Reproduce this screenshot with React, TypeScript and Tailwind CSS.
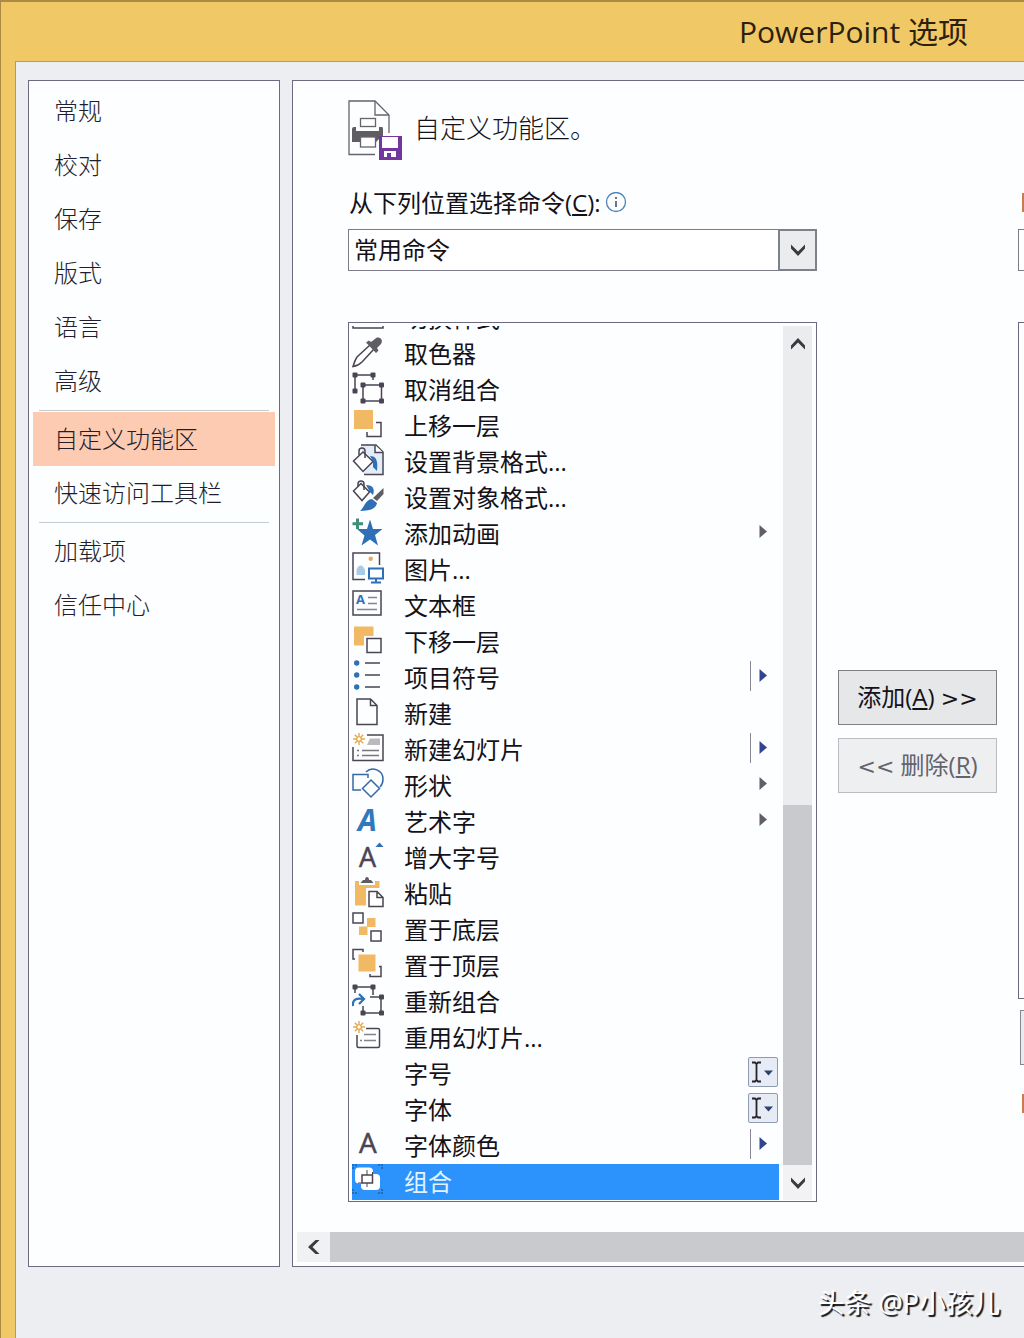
import React, { useState } from 'react';

type Extra = 'menu' | 'split' | 'combo';

interface Command {
  label: string;
  icon?: React.ReactNode;
  extra?: Extra;
}

const INK = '#4a4453';
const BLUE = '#2f6fb5';
const ORANGE = '#f2b964';

const Icon: React.FC<{ children?: React.ReactNode }> = ({ children }) => (
  <svg className="w-8 h-8 shrink-0 overflow-visible" viewBox="0 0 32 32" fill="none" stroke={INK} strokeWidth="1.5" aria-hidden="true">
    {children}
  </svg>
);

const Burst = () => (
  <g stroke="#e5a94a" strokeWidth="1.4">
    <circle cx="7" cy="7" r="2.4" />
    <path d="M7 1v3M7 10v3M1 7h3M10 7h3M2.8 2.8l2 2M9.2 9.2l2 2M11.2 2.8l-2 2M4.8 9.2l-2 2" />
  </g>
);

const Handle: React.FC<{ x: number; y: number }> = ({ x, y }) => (
  <rect x={x - 2.5} y={y - 2.5} width="5" height="5" rx="1" fill={INK} stroke="none" />
);

const commands: Command[] = [
  { label: '切换样式', icon: <Icon><path d="M1 10V28H31V10" /></Icon> },
  {
    label: '取色器',
    icon: (
      <Icon>
        <path d="M18 9L5 21C3 24 2 27 1 30.500C5 30 8 28 10 26L22 13" fill="#fff" />
        <path d="M14 6.500L17 4.500L19 6L23 3C27 -1 32 4 29 8L25 12L26.500 14.500L24 17Z" fill="#5d5d62" stroke="none" />
      </Icon>
    ),
  },
  {
    label: '取消组合',
    icon: (
      <Icon>
        <path d="M3 19V3H21V8" />
        <rect x="11" y="13" width="18.500" height="16" />
        <Handle x={3} y={3} /><Handle x={21} y={3} /><Handle x={3} y={19} />
        <Handle x={11} y={13} /><Handle x={29.5} y={13} /><Handle x={11} y={29} /><Handle x={29.5} y={29} />
      </Icon>
    ),
  },
  {
    label: '上移一层',
    icon: (
      <Icon>
        <rect x="2" y="2" width="19" height="19" fill={ORANGE} stroke="none" />
        <path d="M24 14.500H29V28.500H15V24" />
      </Icon>
    ),
  },
  {
    label: '设置背景格式...',
    icon: (
      <Icon>
        <path d="M9 1H24L31 8V30.500H12" fill="#e3edf8" />
        <path d="M23 1V8.500H31" fill="#fff" />
        <path d="M1.500 17L11 8L21 17.500L11 27.500Z" fill="#fff" />
        <path d="M7 11V7C7 3 13 3 13 7V14" />
        <path d="M18 12C25 12 26 18 25 27L21 23V17Z" fill={BLUE} stroke="none" />
      </Icon>
    ),
  },
  {
    label: '设置对象格式...',
    icon: (
      <Icon>
        <path d="M14 5C21 5 23 9 21 15L18 12Z" fill={BLUE} stroke="none" />
        <path d="M1.500 11L9 3.500L17.500 12L10 20.500Z" fill="#fff" />
        <path d="M6 7V4C6 0 12 0 12 4V10" />
        <path d="M31.500 8V14L25 21L21 18Z" fill="#5d5d62" stroke="none" />
        <path d="M20 19L25 23C24 29 17 31 8 31C12 28 13 20 20 19Z" fill={BLUE} stroke="none" />
      </Icon>
    ),
  },
  {
    label: '添加动画',
    extra: 'menu',
    icon: (
      <Icon>
        <path d="M18 3.500L21 13H30.500L23 19L26 29.500L18 23.500L9.500 29.500L12.500 19.500L5 13H15Z" fill={BLUE} stroke="none" />
        <path d="M5.500 2.500V13M0.500 7.800H11" stroke="#3f8f77" strokeWidth="3" />
      </Icon>
    ),
  },
  {
    label: '图片...',
    icon: (
      <Icon>
        <path d="M13 27.500H1V1H27.500V13" />
        <circle cx="18.700" cy="6.700" r="2.200" fill="#eba65c" stroke="none" />
        <path d="M4.500 23V18C6 12 11 12 13 18V23Z" fill="#a9cbe8" stroke="none" />
        <rect x="17" y="16.500" width="14" height="10" stroke={BLUE} strokeWidth="2" />
        <path d="M24 27V30M19 30.500H29" stroke={BLUE} strokeWidth="2" />
      </Icon>
    ),
  },
  {
    label: '文本框',
    icon: (
      <Icon>
        <rect x="1" y="3" width="28" height="24" />
        <text x="4" y="16" fontSize="13" fontWeight="700" fontFamily="Open Sans, sans-serif" fill={BLUE} stroke="none">A</text>
        <path d="M16 9.500H25M16 15.500H25M5 21.500H25" stroke="#85838c" />
      </Icon>
    ),
  },
  {
    label: '下移一层',
    icon: (
      <Icon>
        <path d="M2 2.500H21.500V12H12V21.500H2Z" fill={ORANGE} stroke="none" />
        <rect x="15" y="14.500" width="14" height="14" />
      </Icon>
    ),
  },
  {
    label: '项目符号',
    extra: 'split',
    icon: (
      <Icon>
        <g fill={BLUE} stroke="none">
          <circle cx="4.700" cy="3" r="2.700" /><circle cx="4.700" cy="15" r="2.700" /><circle cx="4.700" cy="27" r="2.700" />
        </g>
        <path d="M13 3H28M13 15H28M13 27H28" />
      </Icon>
    ),
  },
  {
    label: '新建',
    icon: <Icon><path d="M5 3H18.500L25 9.500V28.500H5Z M18.500 3V9.500H25" /></Icon>,
  },
  {
    label: '新建幻灯片',
    extra: 'split',
    icon: (
      <Icon>
        <path d="M15 3H31V28.500H1V15" />
        <path d="M18 6.500H28V13H15Z" fill="#b9b9be" stroke="none" />
        <path d="M5 18.500H7M10 18.500H27M5 23.500H7M10 23.500H27" stroke="#77757e" />
        <Burst />
      </Icon>
    ),
  },
  {
    label: '形状',
    extra: 'menu',
    icon: (
      <Icon>
        <g stroke="#3569a8">
          <path d="M9 22H1V6.500H16V10" />
          <path d="M14 4C20 -2 31 2 31 11C31 14 30 17 28 19" />
          <path d="M19 12L27.500 20.500L19 29L10.500 20.500Z" />
        </g>
      </Icon>
    ),
  },
  {
    label: '艺术字',
    extra: 'menu',
    icon: (
      <Icon>
        <text x="6" y="27" fontSize="30" fontWeight="700" fontStyle="italic" fontFamily="Open Sans, sans-serif" fill="#3177be" stroke="none">A</text>
      </Icon>
    ),
  },
  {
    label: '增大字号',
    icon: (
      <Icon>
        <text x="7" y="27" fontSize="27" fontFamily="Open Sans, sans-serif" fill={INK} stroke={INK} strokeWidth="0.5">A</text>
        <path d="M23.500 7L27.500 2.500L31.500 7Z" fill={BLUE} stroke="none" />
      </Icon>
    ),
  },
  {
    label: '粘贴',
    icon: (
      <Icon>
        <path d="M3 5H7V9H23V5H27.500V12H14V29.500H3Z" fill={ORANGE} stroke="none" />
        <path d="M8.500 7L11 4H13C13 0 17 0 17 4H19L21.500 7Z" fill="#5d5d62" stroke="none" />
        <path d="M17 15.500H25L31 21.500V30.500H17Z M25 15.500V21.500H31" fill="#fff" />
      </Icon>
    ),
  },
  {
    label: '置于底层',
    icon: (
      <Icon>
        <path d="M15 6H23.500V15H15.500V23H7V14.500H15Z" fill={ORANGE} stroke="none" />
        <rect x="1" y="1" width="10" height="10" /><rect x="19" y="19" width="10" height="10" />
      </Icon>
    ),
  },
  {
    label: '置于顶层',
    icon: (
      <Icon>
        <rect x="6.500" y="6.500" width="17" height="17" fill={ORANGE} stroke="none" />
        <path d="M3 11H1V1.500H11V4M27 18.500H29V28.500H18V26" />
      </Icon>
    ),
  },
  {
    label: '重新组合',
    icon: (
      <Icon>
        <path d="M3 9V3H21V11M11 22V29H29V13H18" />
        <Handle x={3} y={3} /><Handle x={21} y={3} />
        <Handle x={29.5} y={13} /><Handle x={11} y={29} /><Handle x={29.5} y={29} />
        <path d="M1 22C0 15 5 14 11 15M7 10L12 15L7 20" stroke={BLUE} strokeWidth="2.200" />
      </Icon>
    ),
  },
  {
    label: '重用幻灯片...',
    icon: (
      <Icon>
        <path d="M14 8.500H26Q27.500 8.500 27.500 10V26Q27.500 27.500 26 27.500H6.500Q5 27.500 5 26V15" />
        <path d="M12 14.500H24M8 20.500H10M12 20.500H24" stroke="#85838c" />
        <Burst />
      </Icon>
    ),
  },
  { label: '字号', extra: 'combo' },
  { label: '字体', extra: 'combo' },
  {
    label: '字体颜色',
    extra: 'split',
    icon: (
      <Icon>
        <text x="7" y="25" fontSize="28" fontFamily="Open Sans, sans-serif" fill={INK} stroke={INK} strokeWidth="0.5">A</text>
      </Icon>
    ),
  },
  {
    label: '组合',
    icon: (
      <Icon>
        <g fill="#fff" stroke="none">
          <rect x="3" y="3.500" width="18" height="16" rx="4" />
          <rect x="9" y="10" width="19" height="16" rx="4" />
        </g>
        <rect x="10" y="11" width="10.500" height="8" />
        <path d="M10 19H6M15 11V6M20.500 11V8M15 19V23" strokeWidth="1" />
        <path d="M1 5V1H5M26 1H30V5M30 25V29H26M5 29H1V25" stroke="#24609f" strokeDasharray="2 1" />
      </Icon>
    ),
  },
];

const navGroups = [
  ['常规', '校对', '保存', '版式', '语言', '高级'],
  ['自定义功能区', '快速访问工具栏'],
  ['加载项', '信任中心'],
];

const Chevron: React.FC<{ className?: string }> = ({ className = '' }) => (
  <svg className={`w-4 h-4 ${className}`} viewBox="0 0 16 16" fill="#3c3a40" aria-hidden="true">
    <path d="M1 2.500L8 9.500L15 2.500V6.500L8 14L1 6.500Z" />
  </svg>
);

const RowExtra: React.FC<{ kind?: Extra }> = ({ kind }) => {
  if (!kind) return null;
  if (kind === 'combo') {
    return (
      <svg className="w-[31px] h-8" viewBox="0 0 31 32" fill="none" aria-hidden="true">
        <rect x="0.500" y="1.500" width="29" height="29" rx="1.500" fill="#e6ebf5" stroke="#8e9bb0" />
        <path d="M4 6.500H7L8.500 8L10 6.500H13M8.500 8V24M4 25.500H7L8.500 24L10 25.500H13" stroke="#25242c" strokeWidth="1.800" />
        <path d="M16 14.500H25L20.500 19.500Z" fill="#2c4270" />
      </svg>
    );
  }
  return (
    <svg className="w-[31px] h-8" viewBox="0 0 31 32" aria-hidden="true">
      {kind === 'split' && <path d="M2.500 1V31" stroke="#8b8798" />}
      <path d="M11.500 9L19 15.500L11.500 22Z" fill={kind === 'split' ? '#33448f' : '#625d68'} />
    </svg>
  );
};

const Arrows: React.FC<{ text: string }> = ({ text }) => (
  <span className="text-[22px] font-['DejaVu_Sans',sans-serif]">{text}</span>
);

const App: React.FC = () => {
  const [page, setPage] = useState('自定义功能区');
  const [selected, setSelected] = useState('组合');

  return (
    <div className="min-h-screen flex flex-col overflow-hidden bg-[#f0c866] border-t-2 border-l border-[#ad8a43] text-2xl text-[#141218] font-['Open_Sans','Noto_Sans_CJK_SC',sans-serif]">
      <header className="h-[59px] shrink-0 flex items-center justify-end pr-14">
        <h1 className="text-[30px] leading-9 text-[#2b200c]">PowerPoint 选项</h1>
      </header>

      <div className="flex-1 flex flex-col ml-3.5 pl-3 pt-[18px] bg-[#edeef1] border-t border-l border-[#b99a5a]">
        <div className="flex gap-3">
          <nav className="w-[252px] shrink-0 p-1 pt-[3px] bg-[#fcfeff] border border-[#6c6982]">
            {navGroups.map((group, i) => (
              <div key={group[0]}>
                {i > 0 && <hr className="mx-1.5 mt-0.5 mb-px border-[#c3cbd1]" />}
                {group.map((name) => (
                  <button
                    key={name}
                    onClick={() => setPage(name)}
                    className={`block w-full h-[54px] pl-[21px] text-left font-light text-[#231c2c] ${page === name ? 'bg-[#fdcbb1]' : ''}`}
                  >
                    {name}
                  </button>
                ))}
              </div>
            ))}
          </nav>

          <main className="flex-1 min-w-0 flex flex-col bg-[#fcfeff] border border-r-0 border-[#6c6982]">
            <div className="pl-[55px] pt-[19px] flex items-start gap-3">
              <svg className="w-[54px] h-[60px]" viewBox="0 0 54 60" fill="none" stroke="#66636b" strokeWidth="1.300" aria-hidden="true">
                <path d="M27 54.500H1V1H27L41 15V33" />
                <path d="M27 1V15H41" />
                <path d="M4 29Q4 27 6 27H8V31H31V27H34Q35 27 35 29V39H4Z" fill="#5e5e62" stroke="none" />
                <path d="M4 39V42H12V39ZM28 39V42L31 39Z" fill="#5e5e62" stroke="none" />
                <rect x="12.500" y="18.500" width="15" height="8" fill="#fff" />
                <rect x="12.500" y="37" width="15" height="10" fill="#fff" />
                <path d="M31 36H54V60H31Z" fill="#7336a0" stroke="none" />
                <path d="M34 37H50V48H34ZM36 51H48V57H43V53H39V57H36Z" fill="#fff" stroke="none" />
              </svg>
              <h2 className="text-[26px] leading-14 font-light">自定义功能区。</h2>
            </div>

            <div className="pl-[55px] pt-[25px] flex gap-[21px]">
              <section className="flex-1 min-w-0">
                <div className="h-9 pl-px flex items-center">
                  <label htmlFor="source">从下列位置选择命令(<u className="underline-offset-2">C</u>):</label>
                  <svg className="w-[22px] h-[22px] ml-1" viewBox="0 0 22 22" fill="none" stroke="#4d83bd" aria-hidden="true">
                    <circle cx="11" cy="10" r="9.500" strokeWidth="1.300" />
                    <path d="M11 5V7M11 9V15" stroke="#40556e" strokeWidth="1.600" />
                  </svg>
                </div>
                <div className="relative mt-2">
                  <select id="source" className="block w-full h-[42px] pl-[5px] appearance-none bg-white border border-[#7d7b8a] leading-9">
                    <option>常用命令</option>
                  </select>
                  <span className="absolute right-0 inset-y-0 w-[39px] flex items-center justify-center pointer-events-none bg-[#ebecee] border-2 border-[#7e8288]">
                    <Chevron />
                  </span>
                </div>

                <div className="mt-[51px] h-[880px] flex gap-1 pt-[3px] pb-px pl-[3px] pr-1 bg-[#fdfeff] border border-[#6c6982]">
                  <ul className="flex-1 min-w-0 flex flex-col justify-end overflow-hidden">
                    {commands.map((cmd) => (
                      <li key={cmd.label} className="shrink-0">
                        <button
                          onClick={() => setSelected(cmd.label)}
                          className={`w-full h-9 flex items-start gap-5 text-left ${selected === cmd.label ? 'bg-[#2b93fb] text-[#e4f3ff]' : ''}`}
                        >
                          {cmd.icon ?? <Icon />}
                          <span className="flex-1 leading-9">{cmd.label}</span>
                          <RowExtra kind={cmd.extra} />
                        </button>
                      </li>
                    ))}
                  </ul>
                  <div className="w-[29px] flex flex-col bg-[#ebecee]">
                    <button aria-label="向上滚动" className="h-9 flex items-center justify-center"><Chevron className="rotate-180" /></button>
                    <div className="mt-auto h-[360px] bg-[#c9cacd]" />
                    <button aria-label="向下滚动" className="h-[35px] flex items-center justify-center bg-[#f2f2f4]"><Chevron /></button>
                  </div>
                </div>
              </section>

              <div className="w-[159px] shrink-0 pt-[485px] flex flex-col gap-[13px]">
                <button className="h-[55px] bg-[#e6e7e9] border border-[#7f7f86] whitespace-pre">添加(<u className="underline-offset-2">A</u>) <Arrows text=">>" /></button>
                <button className="h-[55px] bg-[#eeeff1] border border-[#b9bcc1] text-[#64626c] whitespace-pre"><Arrows text="<<" /> 删除(<u className="underline-offset-2">R</u>)</button>
              </div>

              <div className="w-1.5 shrink-0 flex flex-col overflow-hidden pt-[8px]">
                <div className="ml-1 h-[19px] bg-[#c87c50]" />
                <div className="mt-[17px] h-[42px] border border-r-0 border-[#7d7b8a]" />
                <div className="mt-[51px] h-[677px] border border-r-0 border-[#6c6982]" />
                <div className="mt-[11px] ml-0.5 h-[55px] border border-r-0 border-[#85848e] bg-[#e9eaec]" />
                <div className="mt-[29px] ml-1 h-[19px] bg-[#c87c50]" />
              </div>
            </div>

            <div className="mt-[30px] mb-1 ml-1 h-[30px] flex bg-[#f0f1f3]">
              <button aria-label="向左滚动" className="w-[33px] flex items-center justify-center"><Chevron className="rotate-90" /></button>
              <div className="flex-1 bg-[#c9cacd]" />
            </div>
          </main>
        </div>

        <footer className="flex-1 flex items-center justify-end pr-6">
          <p className="text-[27px] leading-9 text-white [text-shadow:2px_2px_1px_#111]">头条 @P小孩儿</p>
        </footer>
      </div>
    </div>
  );
};

export default App;
